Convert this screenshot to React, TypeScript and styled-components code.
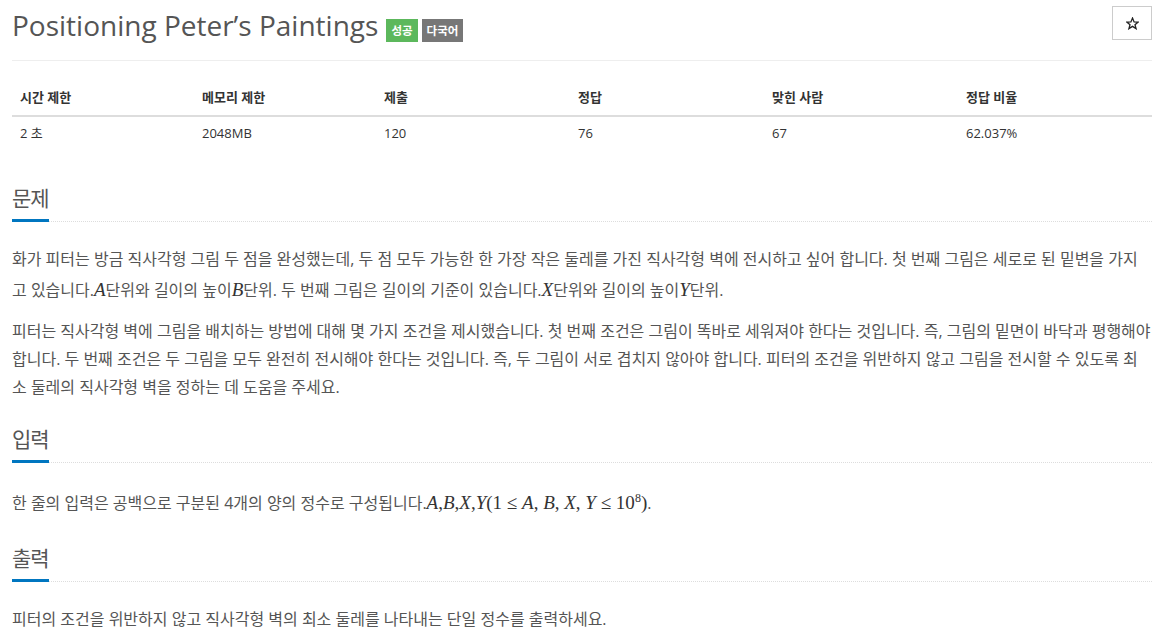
import * as React from "react"
import styled, { createGlobalStyle } from "styled-components"

const GlobalStyle = createGlobalStyle`
  body {
    margin: 0;
    background: #fff;
    font-family: "Open Sans", "Noto Sans CJK KR", sans-serif;
    color: #555;
  }
`

const stats = [
  { title: "시간 제한", value: "2 초", width: 182 },
  { title: "메모리 제한", value: "2048MB", width: 182 },
  { title: "제출", value: "120", width: 194 },
  { title: "정답", value: "76", width: 194 },
  { title: "맞힌 사람", value: "67", width: 194 },
  { title: "정답 비율", value: "62.037%", width: 194 },
]

const M = (props: { children: React.ReactNode }) => <MathVar>{props.children}</MathVar>

const StarIcon = () => (
  <svg width="13" height="13" viewBox="0 0 24 24" fill="none" stroke="#222" strokeWidth="2.4" strokeLinejoin="miter">
    <polygon points="12,2 14.9,9 22.5,9.3 16.6,14.1 18.6,21.5 12,17.3 5.4,21.5 7.4,14.1 1.5,9.3 9.1,9" />
  </svg>
)

const App = () => {
  return (
    <Page>
      <GlobalStyle />
      <TitleBar>
        <Title>Positioning Peter’s Paintings</Title>
        <Badge $color="#5cb85c">성공</Badge>
        <Badge $color="#777">다국어</Badge>
        <StarButton aria-label="star">
          <StarIcon />
        </StarButton>
      </TitleBar>
      <StatTable>
        {stats.map((s) => (
          <StatCol key={s.title} $width={s.width}>
            <StatHead>{s.title}</StatHead>
            <StatCell>{s.value}</StatCell>
          </StatCol>
        ))}
      </StatTable>

      <Section>
        <Headline>
          <HeadlineText>문제</HeadlineText>
        </Headline>
        <Text>
          화가 피터는 방금 직사각형 그림 두 점을 완성했는데, 두 점 모두 가능한 한 가장 작은 둘레를 가진 직사각형 벽에 전시하고 싶어 합니다. 첫 번째 그림은 세로로 된 밑변을 가지고 있습니다.<M>A</M>단위와 길이의 높이<M>B</M>단위. 두 번째 그림은 길이의 기준이 있습니다.<M>X</M>단위와 길이의 높이<M>Y</M>단위.
        </Text>
        <Text>
          피터는 직사각형 벽에 그림을 배치하는 방법에 대해 몇 가지 조건을 제시했습니다. 첫 번째 조건은 그림이 똑바로 세워져야 한다는 것입니다. 즉, 그림의 밑면이 바닥과 평행해야 합니다. 두 번째 조건은 두 그림을 모두 완전히 전시해야 한다는 것입니다. 즉, 두 그림이 서로 겹치지 않아야 합니다. 피터의 조건을 위반하지 않고 그림을 전시할 수 있도록 최소 둘레의 직사각형 벽을 정하는 데 도움을 주세요.
        </Text>
      </Section>

      <Section>
        <Headline>
          <HeadlineText>입력</HeadlineText>
        </Headline>
        <Text>
          한 줄의 입력은 공백으로 구분된 4개의 양의 정수로 구성됩니다.<M>A</M><MathUp>,</MathUp><M>B</M><MathUp>,</MathUp><M>X</M><MathUp>,</MathUp><M>Y</M>
          <MathUp>(1 ≤ </MathUp><M>A</M><MathUp>, </MathUp><M>B</M><MathUp>, </MathUp><M>X</M><MathUp>, </MathUp><M>Y</M>
          <MathUp> ≤ 10<Sup>8</Sup>)</MathUp>.
        </Text>
      </Section>

      <Section>
        <Headline>
          <HeadlineText>출력</HeadlineText>
        </Headline>
        <Text>피터의 조건을 위반하지 않고 직사각형 벽의 최소 둘레를 나타내는 단일 정수를 출력하세요.</Text>
      </Section>
    </Page>
  )
}

const Page = styled.div`
  width: 1140px;
  padding: 0 6px 0 12px;
`

const TitleBar = styled.div`
  position: relative;
  display: flex;
  align-items: center;
  height: 60px;
  border-bottom: 1px solid #eee;
  margin-bottom: 18px;
`

const Title = styled.h1`
  margin: -10px 8px 0 0;
  font-size: 28px;
  font-weight: 400;
  color: #555;
`

const Badge = styled.span<{ $color: string }>`
  display: inline-block;
  margin: 0 4px 0 0;
  padding: 0 5px;
  height: 23px;
  line-height: 23px;
  background: ${(p) => p.$color};
  color: #fff;
  font-size: 11.5px;
  font-weight: 700;
`

const StarButton = styled.button`
  position: absolute;
  right: 0;
  top: 6px;
  width: 40px;
  height: 34px;
  display: flex;
  align-items: center;
  justify-content: center;
  padding: 0;
  border: 1px solid #ccc;
  background: #fff;
  cursor: pointer;
`

const StatTable = styled.div`
  display: flex;
  padding-bottom: 10px;
  font-size: 13px;
  color: #333;
`

const StatCol = styled.div<{ $width: number }>`
  width: ${(p) => p.$width}px;
  display: flex;
  flex-direction: column;
`

const StatHead = styled.div`
  padding: 8px;
  line-height: 20px;
  font-weight: 700;
  border-bottom: 2px solid #ddd;
`

const StatCell = styled.div`
  padding: 8px;
  line-height: 17px;
`

const Section = styled.section`
  margin-top: 23px;
`

const Headline = styled.div`
  border-bottom: 1px dotted #ddd;
  margin-bottom: 23px;
`

const HeadlineText = styled.h2`
  display: inline-block;
  margin: 0 0 -1px;
  padding-bottom: 6px;
  font-size: 21px;
  letter-spacing: -1px;
  font-weight: 400;
  line-height: 30px;
  color: #555;
  border-bottom: 3px solid #0076c0;
`

const Text = styled.p`
  margin: 0 0 10px;
  font-size: 16px;
  line-height: 28px;
  color: #555;
`

const MathVar = styled.span`
  display: inline-block;
  line-height: 34px;
  font-family: "Liberation Serif", "DejaVu Serif", serif;
  font-style: italic;
  font-size: 19px;
  color: #333;
`

const MathUp = styled.span`
  display: inline-block;
  line-height: 34px;
  white-space: pre;
  font-family: "Liberation Serif", "DejaVu Serif", serif;
  font-size: 19px;
  color: #333;
`

const Sup = styled.sup`
  font-size: 12px;
  line-height: 0;
`

export default App
